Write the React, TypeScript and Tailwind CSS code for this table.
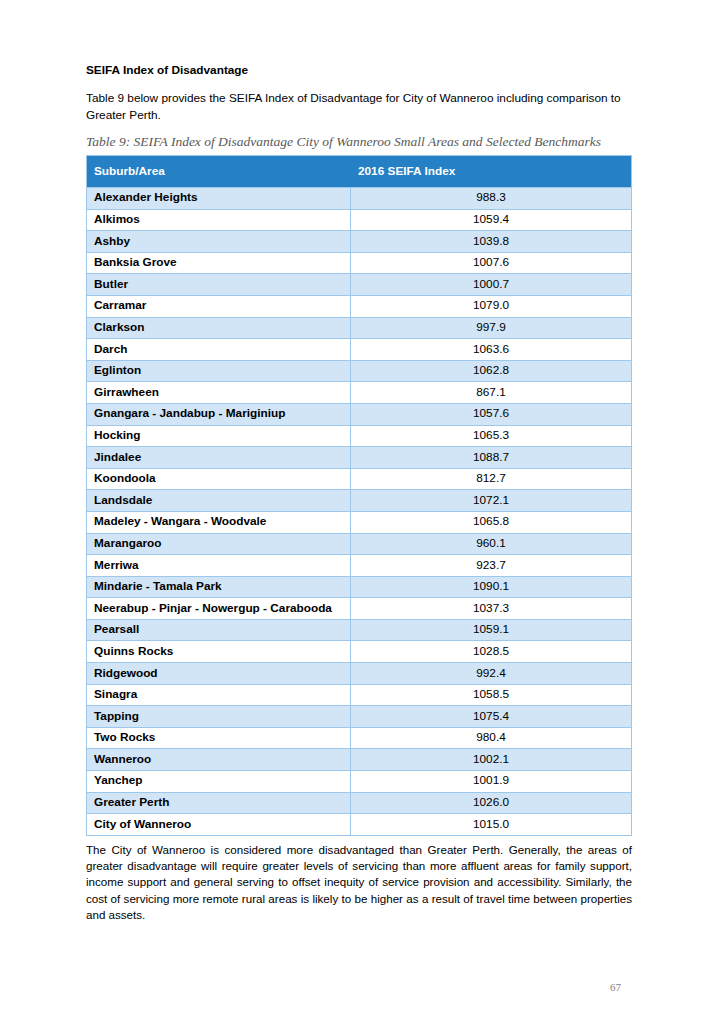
const rows: [string, string][] = [
  ["Alexander Heights", "988.3"],
  ["Alkimos", "1059.4"],
  ["Ashby", "1039.8"],
  ["Banksia Grove", "1007.6"],
  ["Butler", "1000.7"],
  ["Carramar", "1079.0"],
  ["Clarkson", "997.9"],
  ["Darch", "1063.6"],
  ["Eglinton", "1062.8"],
  ["Girrawheen", "867.1"],
  ["Gnangara - Jandabup - Mariginiup", "1057.6"],
  ["Hocking", "1065.3"],
  ["Jindalee", "1088.7"],
  ["Koondoola", "812.7"],
  ["Landsdale", "1072.1"],
  ["Madeley - Wangara - Woodvale", "1065.8"],
  ["Marangaroo", "960.1"],
  ["Merriwa", "923.7"],
  ["Mindarie - Tamala Park", "1090.1"],
  ["Neerabup - Pinjar - Nowergup - Carabooda", "1037.3"],
  ["Pearsall", "1059.1"],
  ["Quinns Rocks", "1028.5"],
  ["Ridgewood", "992.4"],
  ["Sinagra", "1058.5"],
  ["Tapping", "1075.4"],
  ["Two Rocks", "980.4"],
  ["Wanneroo", "1002.1"],
  ["Yanchep", "1001.9"],
  ["Greater Perth", "1026.0"],
  ["City of Wanneroo", "1015.0"],
];

export default function App() {
  return (
    <div className="relative h-[1021px] w-[706px] bg-white font-['Liberation_Sans',Arial,sans-serif] text-black">
      <div className="ml-[86px] w-[546px] pt-[63px]">
        <h2 className="text-[11.8px] font-bold leading-[14px]">SEIFA Index of Disadvantage</h2>
        <p className="mt-[13px] text-[11.8px] leading-[16.5px]">
          Table 9 below provides the SEIFA Index of Disadvantage for City of Wanneroo including comparison to
          Greater Perth.
        </p>
        <p className="mt-[11px] font-['Liberation_Serif',serif] text-[13.5px] italic leading-[16px] text-[#595959]">
          Table 9: SEIFA Index of Disadvantage City of Wanneroo Small Areas and Selected Benchmarks
        </p>
        <div className="mt-[5px] border border-[#9dc8ec]">
          <div className="flex h-[31px] items-center bg-[#2580c5] text-[11.8px] font-bold text-white">
            <div className="w-[264px] pl-[7px]">Suburb/Area</div>
            <div className="flex-1 pl-[7px]">2016 SEIFA Index</div>
          </div>
          {rows.map(([name, value], i) => (
            <div
              key={name}
              className={`flex h-[21.6px] items-center border-t border-[#9dc8ec] text-[11.8px] ${
                i % 2 === 0 ? "bg-[#d1e5f6]" : "bg-white"
              }`}
            >
              <div className="flex h-full w-[264px] items-center border-r border-[#9dc8ec] pl-[7px] font-bold">
                {name}
              </div>
              <div className="flex-1 text-center">{value}</div>
            </div>
          ))}
        </div>
        <p className="mt-[6px] text-justify text-[11.6px] leading-[16.3px]">
          The City of Wanneroo is considered more disadvantaged than Greater Perth. Generally, the areas of
          greater disadvantage will require greater levels of servicing than more affluent areas for family
          support, income support and general serving to offset inequity of service provision and accessibility.
          Similarly, the cost of servicing more remote rural areas is likely to be higher as a result of travel
          time between properties and assets.
        </p>
      </div>
      <div className="absolute left-[610px] top-[979px] font-['Liberation_Serif',serif] text-[11px] text-[#7f7f7f]">
        67
      </div>
    </div>
  );
}
